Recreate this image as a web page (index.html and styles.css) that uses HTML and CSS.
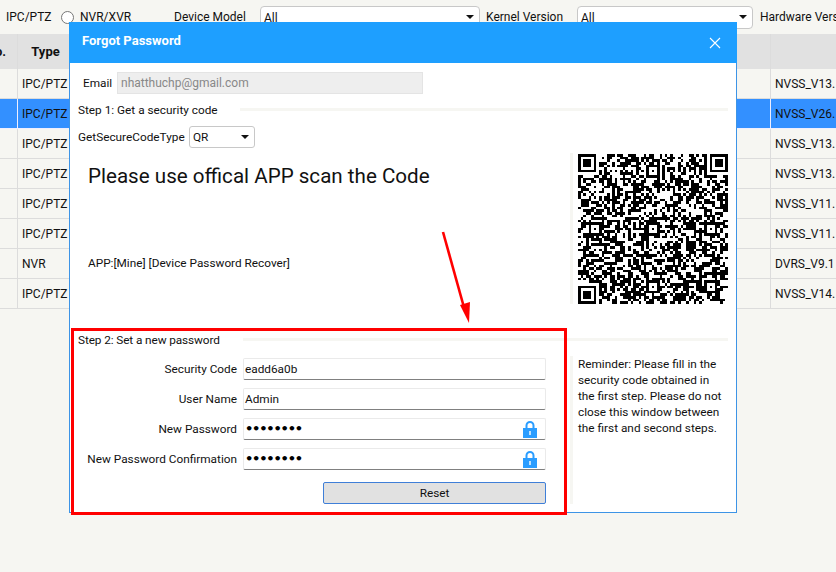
FILE: index.html
```html
<!DOCTYPE html>
<html lang="en">
<head>
<meta charset="utf-8">
<title>Forgot Password</title>
<link rel="stylesheet" href="styles.css">
</head>
<body>
<div class="page">
  <div class="toolbar">
    <span class="t-ipc">IPC/PTZ</span>
    <span class="radio"></span>
    <span class="t-nvr">NVR/XVR</span>
    <span class="t-model">Device Model</span>
    <span class="combo combo-model">All<i class="caret"></i></span>
    <span class="t-kernel">Kernel Version</span>
    <span class="combo combo-kernel">All<i class="caret"></i></span>
    <span class="t-hw">Hardware Version</span>
  </div>
  <div class="grid-table">
    <div class="tr th"><div class="c c-no">No.</div><div class="c c-type">Type</div><div class="c c-mid"></div><div class="c c-ver"></div></div>
    <div class="tr"><div class="c c-no"></div><div class="c c-type">IPC/PTZ</div><div class="c c-mid"></div><div class="c c-ver">NVSS_V13.</div></div>
    <div class="tr sel"><div class="c c-no"></div><div class="c c-type">IPC/PTZ</div><div class="c c-mid"></div><div class="c c-ver">NVSS_V26.</div></div>
    <div class="tr"><div class="c c-no"></div><div class="c c-type">IPC/PTZ</div><div class="c c-mid"></div><div class="c c-ver">NVSS_V13.</div></div>
    <div class="tr"><div class="c c-no"></div><div class="c c-type">IPC/PTZ</div><div class="c c-mid"></div><div class="c c-ver">NVSS_V13.</div></div>
    <div class="tr"><div class="c c-no"></div><div class="c c-type">IPC/PTZ</div><div class="c c-mid"></div><div class="c c-ver">NVSS_V11.</div></div>
    <div class="tr"><div class="c c-no"></div><div class="c c-type">IPC/PTZ</div><div class="c c-mid"></div><div class="c c-ver">NVSS_V11.</div></div>
    <div class="tr"><div class="c c-no"></div><div class="c c-type">NVR</div><div class="c c-mid"></div><div class="c c-ver">DVRS_V9.1</div></div>
    <div class="tr"><div class="c c-no"></div><div class="c c-type">IPC/PTZ</div><div class="c c-mid"></div><div class="c c-ver">NVSS_V14.</div></div>
  </div>
</div>

<div class="dialog">
  <div class="dlg-head">
    <span class="dlg-title">Forgot Password</span>
    <svg class="dlg-close" width="12" height="12" viewBox="0 0 12 12"><path d="M1 1l10 10M11 1L1 11" stroke="#fff" stroke-width="1.1" fill="none"/></svg>
  </div>
  <div class="dlg-body">
    <div class="email-row">
      <span class="email-label">Email</span>
      <span class="email-input">nhatthuchp@gmail.com</span>
    </div>
    <div class="legend legend-1"><span>Step 1: Get a security code</span><i></i></div>
    <div class="type-row">
      <span class="type-label">GetSecureCodeType</span>
      <span class="combo combo-type">QR<i class="caret"></i></span>
    </div>
    <div class="qr-row">
      <div class="qr-text">
        <div class="qr-title">Please use offical APP scan the Code</div>
        <div class="qr-app">APP:[Mine] [Device Password Recover]</div>
      </div>
      <div class="divider"></div>
      <svg id="qr" class="qr" width="150" height="150" viewBox="0 0 57 57" shape-rendering="crispEdges"></svg>
    </div>
    <div class="legend legend-2"><span>Step 2: Set a new password</span><i></i></div>
    <div class="step2">
      <div class="form">
        <div class="f-row"><label>Security Code</label><span class="f-input">eadd6a0b</span></div>
        <div class="f-row"><label>User Name</label><span class="f-input">Admin</span></div>
        <div class="f-row"><label>New Password</label><span class="f-input dots">••••••••<svg class="lock" width="14" height="18" viewBox="0 0 14 18"><path d="M3.5 9V5.5a3.5 3.5 0 0 1 7 0V9" fill="none" stroke="#2a9dff" stroke-width="2"/><path d="M0 8h14v10H0z" fill="#2a9dff"/><path d="M6 11h2v4H6z" fill="#bfe2ff"/></svg></span></div>
        <div class="f-row"><label>New Password Confirmation</label><span class="f-input dots">••••••••<svg class="lock" width="14" height="18" viewBox="0 0 14 18"><path d="M3.5 9V5.5a3.5 3.5 0 0 1 7 0V9" fill="none" stroke="#2a9dff" stroke-width="2"/><path d="M0 8h14v10H0z" fill="#2a9dff"/><path d="M6 11h2v4H6z" fill="#bfe2ff"/></svg></span></div>
        <div class="btn-row"><span class="reset">Reset</span></div>
      </div>
      <div class="divider"></div>
      <p class="reminder">Reminder: Please fill in the security code obtained in the first step. Please do not close this window between the first and second steps.</p>
    </div>
  </div>
</div>

<div class="red-box"></div>
<svg class="red-arrow" width="40" height="100" viewBox="0 0 40 100"><path d="M4 1L26 80" stroke="#f00" stroke-width="2.6" fill="none"/><path d="M30 92L21 74L31 71z" fill="#f00"/></svg>
<script src="qr.js"></script>
</body>
</html>
```

FILE: styles.css
```css
* { box-sizing: border-box; }
html, body { margin: 0; padding: 0; }
body {
  width: 836px; height: 572px; overflow: hidden; position: relative;
  background: #f6f6f2; color: #111;
  font: 11.8px/16px Roboto, "Liberation Sans", sans-serif;
}
.toolbar { height: 34px; display: flex; align-items: center; white-space: nowrap; overflow: hidden; padding-left: 6px; font-size: 12px; }
.toolbar > * { flex: none; }
.t-ipc { width: 55px; }
.radio { width: 13px; height: 13px; border: 1px solid #777; border-radius: 50%; background: #fff; margin-right: 6px; }
.t-nvr { width: 94px; }
.t-model { width: 86px; }
.combo { position: relative; display: block; background: #fff; border: 1px solid #c8c8c8; border-radius: 4px; height: 23px; line-height: 22px; padding-left: 3px; }
.combo-model { width: 220px; margin-right: 6px; }
.t-kernel { width: 91px; }
.combo-kernel { width: 176px; margin-right: 7px; }
.caret { position: absolute; right: 5px; top: 8px; width: 0; height: 0; border: 4px solid transparent; border-top: 4px solid #111; border-bottom: 0; }
.grid-table { width: 836px; }
.tr { display: grid; grid-template-columns: 18px 56px 697px 65px; height: 30px; }
.th { height: 35px; background: #e1e1e1; font-weight: 700; }
.c { border-right: 1px solid #dcdcdc; border-bottom: 1px solid #dcdcdc; padding-left: 4px; line-height: 30px; white-space: nowrap; overflow: hidden; font-size: 12px; }
.th .c { line-height: 36px; border-bottom: 0; font-size: 13px; }
.th .c-no { display: flex; justify-content: flex-end; padding: 0 11px 0 0; }
.th .c-type { text-align: center; padding: 0; }
.c-ver { border-right: 0; }
.sel { background: #3390ff; }
.sel .c { border-bottom-color: #eef; border-right-color: #eef; }

.dialog { position: absolute; left: 69px; top: 22px; width: 668px; height: 491px; display: flex; flex-direction: column; }
.dlg-head { height: 41px; background: #1e9fff; color: #fff; display: flex; align-items: center; justify-content: space-between; padding: 0 16px 4px 13px; flex: none; }
.dlg-title { font-weight: 700; font-size: 13px; }
.dlg-close { margin-top: 5px; }
.dlg-body { flex: 1; background: #fff; border: 1px solid #3d94e6; border-top: 0; display: flex; flex-direction: column; }
.email-row { display: flex; margin: 9px 0 0 13px; height: 22px; line-height: 22px; }
.email-label { width: 34px; }
.email-input { width: 306px; background: #eee; border: 1px solid #e4e4e4; color: #888; padding-left: 3px; line-height: 20px; font-size: 12px; }
.legend { display: flex; align-items: center; height: 16px; padding: 0 8px; white-space: nowrap; }
.legend i { flex: 1; height: 3px; background: #f6f6f2; margin-top: -1px; }
.legend-1 { margin-top: 8px; }
.legend-1 span { width: 162px; }
.legend-2 { margin-top: 28px; }
.legend-2 span { width: 165px; letter-spacing: -.1px; }
.type-row { display: flex; margin: 8px 0 0 8px; height: 22px; line-height: 22px; }
.type-label { width: 111px; white-space: nowrap; }
.combo-type { width: 66px; height: 22px; line-height: 20px; padding-left: 3px; border-radius: 3px; }
.qr-row { display: flex; margin-top: 5px; height: 151px; }
.qr-text { width: 500px; padding-left: 18px; position: relative; }
.qr-title { font-size: 20.6px; line-height: 24px; margin-top: 11px; white-space: nowrap; }
.qr-app { margin-top: 67px; white-space: nowrap; }
.divider { width: 3px; background: #f6f6f2; flex: none; }
.qr { margin: 1px 0 0 5px; display: block; }
.step2 { display: flex; margin-top: 8px; height: 148px; }
.form { width: 500px; display: flex; flex-direction: column; gap: 8px; padding-top: 2px; }
.f-row { display: flex; height: 22px; line-height: 22px; }
.f-row label { width: 167px; text-align: right; margin-right: 6px; white-space: nowrap; }
.f-input { position: relative; width: 303px; border: 1px solid #eaeaea; border-bottom: 1px solid #808080; border-radius: 2px; padding-left: 1px; line-height: 20px; background: #fff; }
.dots { font-family: "DejaVu Sans", sans-serif; font-size: 13px; font-weight: 700; color: #000; letter-spacing: -1.2px; }
.lock { position: absolute; right: 8px; top: 1px; }
.btn-row { display: flex; justify-content: flex-end; margin-top: 4px; width: 476px; }
.reset { width: 223px; height: 22px; background: #e1e1e1; border: 1px solid #3f7fd8; border-radius: 2px; text-align: center; line-height: 20px; }
.reminder { margin: 0 0 0 5px; width: 150px; padding-top: 0; }

.red-box { position: absolute; left: 71px; top: 328px; width: 496px; height: 187px; border: 3px solid #f00; }
.red-arrow { position: absolute; left: 439px; top: 231px; }
```

FILE: qr.js
```js
(function () {
  var N = 57, svg = document.getElementById('qr'), seed = 20231;
  function rnd() { seed = (seed * 16807) % 2147483647; return seed / 2147483647; }
  var g = [], x, y, i;
  for (y = 0; y < N; y++) { g[y] = []; for (x = 0; x < N; x++) g[y][x] = rnd() < 0.52 ? 1 : 0; }
  function box(cx, cy, size, ring) {
    for (var yy = -ring; yy < size + ring; yy++) for (var xx = -ring; xx < size + ring; xx++) {
      var px = cx + xx, py = cy + yy;
      if (px < 0 || py < 0 || px >= N || py >= N) continue;
      var outer = xx < 0 || yy < 0 || xx >= size || yy >= size;
      var edge = xx === 0 || yy === 0 || xx === size - 1 || yy === size - 1;
      var inner = xx >= Math.floor(size / 2) - (size > 5 ? 1 : 0) && xx <= Math.floor(size / 2) + (size > 5 ? 1 : 0) &&
                  yy >= Math.floor(size / 2) - (size > 5 ? 1 : 0) && yy <= Math.floor(size / 2) + (size > 5 ? 1 : 0);
      g[py][px] = outer ? 0 : (edge || inner ? 1 : 0);
    }
  }
  for (i = 8; i < N - 8; i++) { g[6][i] = i % 2 ? 0 : 1; g[i][6] = i % 2 ? 0 : 1; }
  [[26, 4], [48, 4], [4, 26], [26, 26], [48, 26], [4, 48], [26, 48], [48, 48]].forEach(function (a) { box(a[0], a[1], 5, 0); });
  box(0, 0, 7, 1); box(50, 0, 7, 1); box(0, 50, 7, 1);
  var d = '';
  for (y = 0; y < N; y++) for (x = 0; x < N; x++) if (g[y][x]) d += 'M' + x + ' ' + y + 'h1v1h-1z';
  var p = document.createElementNS('http://www.w3.org/2000/svg', 'path');
  p.setAttribute('d', d); p.setAttribute('fill', '#000');
  svg.appendChild(p);
})();
```
